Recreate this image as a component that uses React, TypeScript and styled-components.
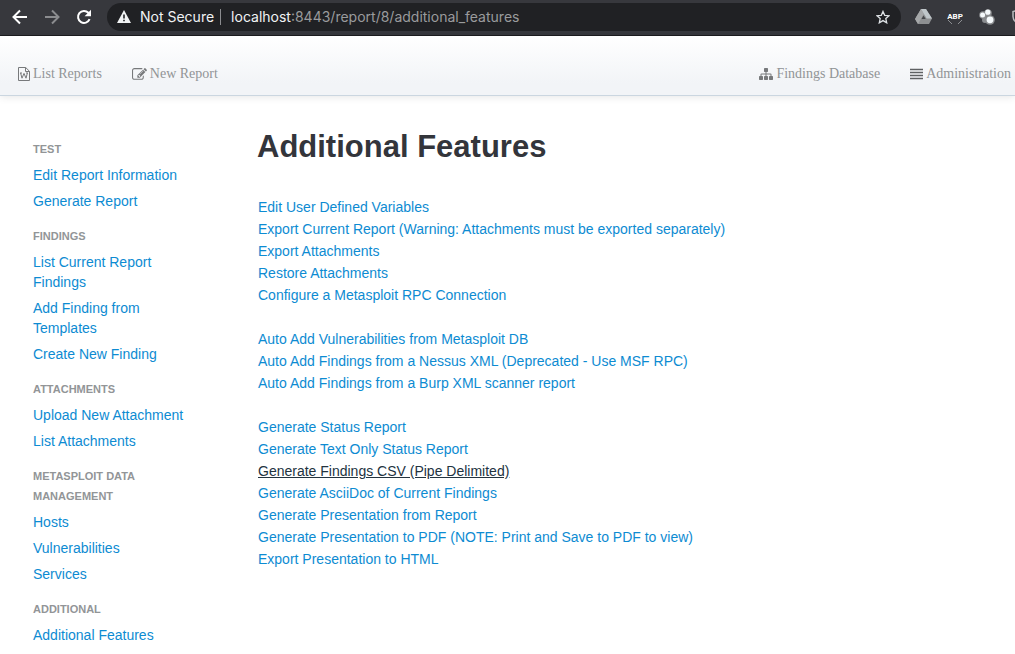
import React from "react";
import styled, { createGlobalStyle } from "styled-components";

const GlobalStyle = createGlobalStyle`
  *, *::before, *::after { box-sizing: border-box; }
  body {
    margin: 0;
    background: #fff;
    color: #333;
    font-family: "Liberation Sans", Arial, Helvetica, sans-serif;
    font-size: 14px;
    line-height: 20px;
    overflow-x: hidden;
  }
`;

const Browser = styled.header`
  display: flex;
  align-items: center;
  height: 36px;
  padding: 0 0 2px 8px;
  background: #37383d;
  border-bottom: 1px solid #1c1d20;
  overflow: hidden;
`;

const ToolButton = styled.button<{ $dim?: boolean }>`
  display: flex;
  align-items: center;
  justify-content: center;
  flex: none;
  width: 32px;
  height: 28px;
  padding: 0 4px;
  border: 0;
  background: none;
  color: ${(p) => (p.$dim ? "#8b8c8f" : "#fff")};
`;

const HistoryButtons = styled.div`
  display: flex;
  flex: none;
  width: 99px;
  margin-left: -4px;
`;

const Omnibox = styled.div`
  display: flex;
  align-items: center;
  flex: 1;
  min-width: 0;
  height: 28px;
  padding: 0 2px 0 10px;
  margin-left: 4px;
  border-radius: 14px;
  background: #202124;
  color: #f1f3f4;
  font-family: Inter, Roboto, sans-serif;
  font-size: 14px;
`;

const Security = styled.span`
  display: flex;
  align-items: center;
  gap: 9px;
  flex: none;
  padding-right: 6px;
  margin-right: 10px;
  border-right: 1px solid #8b8c8f;
  line-height: 16px;
`;

const Address = styled.input`
  flex: 1;
  min-width: 0;
  padding: 0;
  border: 0;
  outline: 0;
  background: none;
  color: #9a9b9d;
  font: inherit;
`;

const Extensions = styled.div`
  display: flex;
  flex: none;
  width: 114px;
  padding-left: 6px;
  overflow: hidden;
`;

const NavBar = styled.nav`
  display: flex;
  align-items: flex-end;
  justify-content: space-between;
  height: 60px;
  padding: 0 4px 11px 18px;
  background: linear-gradient(#fff, #f2f4f7 80%);
  border-bottom: 1px solid #cbd6e0;
  box-shadow: 0 1px 8px rgba(0, 0, 0, 0.1);
  font-family: "Liberation Serif", "Times New Roman", serif;
`;

const NavGroup = styled.div`
  display: flex;
  gap: 30px;
`;

const NavLink = styled.a`
  display: flex;
  align-items: center;
  gap: 3px;
  color: #919496;
  text-decoration: none;
  white-space: nowrap;
  svg { color: #77797b; }
`;

const Layout = styled.div`
  display: flex;
  gap: 56px;
  padding: 31px 20px 0 33px;
`;

const Sidebar = styled.aside`
  flex: none;
  width: 168px;
  padding-top: 9px;
`;

const SideSection = styled.section`
  margin-bottom: 9px;
`;

const SideHeading = styled.h2`
  margin: 0;
  padding: 3px 30px 3px 0;
  color: #929597;
  font-size: 11px;
  line-height: 20px;
  text-transform: uppercase;
`;

const List = styled.ul`
  margin: 0;
  padding: 0;
  list-style: none;
`;

const SideItem = styled.li`
  padding: 3px 0;
`;

const Link = styled.a<{ $active?: boolean }>`
  color: ${(p) => (p.$active ? "#23333f" : "#0d8bd2")};
  text-decoration: ${(p) => (p.$active ? "underline" : "none")};
`;

const Main = styled.main`
  flex: 1;
  min-width: 0;
`;

const Title = styled.h1`
  margin: 0 0 29px;
  color: #33353b;
  font-size: 31px;
  line-height: 40px;
`;

const FeatureList = styled(List)`
  margin-bottom: 22px;
  padding-left: 1px;
  line-height: 22px;
`;

const sections = [
  { title: "Test", links: ["Edit Report Information", "Generate Report"] },
  {
    title: "Findings",
    links: ["List Current Report Findings", "Add Finding from Templates", "Create New Finding"],
  },
  { title: "Attachments", links: ["Upload New Attachment", "List Attachments"] },
  { title: "Metasploit Data Management", links: ["Hosts", "Vulnerabilities", "Services"] },
  { title: "Additional", links: ["Additional Features"] },
];

const featureGroups = [
  [
    "Edit User Defined Variables",
    "Export Current Report (Warning: Attachments must be exported separately)",
    "Export Attachments",
    "Restore Attachments",
    "Configure a Metasploit RPC Connection",
  ],
  [
    "Auto Add Vulnerabilities from Metasploit DB",
    "Auto Add Findings from a Nessus XML (Deprecated - Use MSF RPC)",
    "Auto Add Findings from a Burp XML scanner report",
  ],
  [
    "Generate Status Report",
    "Generate Text Only Status Report",
    "Generate Findings CSV (Pipe Delimited)",
    "Generate AsciiDoc of Current Findings",
    "Generate Presentation from Report",
    "Generate Presentation to PDF (NOTE: Print and Save to PDF to view)",
    "Export Presentation to HTML",
  ],
];

const highlighted = "Generate Findings CSV (Pipe Delimited)";

const ArrowIcon = ({ flip }: { flip?: boolean }) => (
  <svg width="16" height="16" viewBox="0 0 16 16" fill="none" stroke="currentColor" strokeWidth="2">
    <path d={flip ? "M1 8h13M8 1.5 14.5 8 8 14.5" : "M15 8H2M8 1.5 1.5 8 8 14.5"} />
  </svg>
);

const ReloadIcon = () => (
  <svg width="16" height="16" viewBox="0 0 16 16">
    <path d="M13.6 10.2A6 6 0 1 1 12.4 3.8L14 5.4" fill="none" stroke="currentColor" strokeWidth="2" />
    <path d="M15 .8v6.4H8.6z" fill="currentColor" />
  </svg>
);

const WarningIcon = () => (
  <svg width="14" height="13" viewBox="0 0 14 13">
    <path d="M7 0l7 13H0z" fill="currentColor" />
    <path d="M6.2 4.5h1.6v4H6.2zM6.2 9.7h1.6v1.6H6.2z" fill="#202124" />
  </svg>
);

const StarIcon = () => (
  <svg width="14" height="14" viewBox="0 0 14 14" fill="none" stroke="#dfe3e6" strokeWidth="1.3">
    <path d="M7 1.4l1.700 3.900 4.300.4-3.200 2.900.9 4.200L7 10.600l-3.700 2.200.9-4.200L1 5.700l4.300-.4z" />
  </svg>
);

const DriveIcon = () => (
  <svg width="17" height="15" viewBox="0 0 17 15">
    <path d="M6 0h5l6 9.5-3 5.5H3L0 10z" fill="#8d8f91" />
    <path d="M6 0L0 10l3 5 5.8-10z" fill="#a5a7a9" />
    <path d="M6 0h5l6 9.5h-5.3z" fill="#bfc6ca" />
    <path d="M8.5 6.6l2.2 3.4H6.5z" fill="#45474b" />
  </svg>
);

const AdblockIcon = () => (
  <svg width="16" height="17" viewBox="0 0 16 17">
    <path d="M1 12l4 4M15 12l-4 4" stroke="#8d8f92" fill="none" />
    <text x="8" y="11" fill="#fff" fontFamily="Roboto, Arial, sans-serif" fontSize="8" fontWeight="700" textAnchor="middle">
      ABP
    </text>
  </svg>
);

const CirclesIcon = () => (
  <svg width="16" height="16" viewBox="0 0 16 16">
    <g fill="#898b8e">
      <circle cx="4" cy="6" r="3.8" />
      <circle cx="9" cy="4" r="3.8" />
      <circle cx="11" cy="11" r="4.8" />
      <circle cx="6" cy="11" r="3" />
    </g>
    <g fill="#f5f9fb">
      <circle cx="3.6" cy="6" r="2.5" />
      <circle cx="8.8" cy="3.2" r="2.6" />
      <circle cx="11" cy="10.8" r="3.4" />
    </g>
  </svg>
);

const ShieldIcon = () => (
  <svg width="16" height="16" viewBox="0 0 16 16">
    <path d="M8 1L2 2.6v5q0 4.6 6 7.4 6-2.800 6-7.400v-5z" fill="none" stroke="#b9bcbf" strokeWidth="1.5" />
  </svg>
);

const WordFileIcon = () => (
  <svg width="12" height="14" viewBox="0 0 12 14" fill="none" stroke="currentColor">
    <path d="M.5.5h7.200l3.800 3.800v9.200H.5zM7.500.5v4h4" />
    <path d="M2.600 6l1.400 5.200L6 6.400l2 4.800L9.400 6M2 6h2M8 6h2" />
  </svg>
);

const EditIcon = () => (
  <svg width="15" height="15" viewBox="0 0 1792 1792" fill="currentColor">
    <path d="M888 1184l116-116-152-152-116 116v56h96v96h56zm440-720q-16-16-33 1l-350 350q-17 17-1 33t33-1l350-350q17-17 1-33zm80 594v190q0 119-84.500 203.500t-203.500 84.500h-832q-119 0-203.500-84.500t-84.500-203.500v-832q0-119 84.500-203.500t203.500-84.500h832q63 0 117 25 15 7 18 23 3 17-9 29l-49 49q-14 14-32 8-23-6-45-6h-832q-66 0-113 47t-47 113v832q0 66 47 113t113 47h832q66 0 113-47t47-113v-126q0-13 9-22l64-64q15-15 35-7t20 29zm-96-738l288 288-672 672h-288v-288zm444 132l-92 92-288-288 92-92q28-28 68-28t68 28l152 152q28 28 28 68t-28 68z" />
  </svg>
);

const SitemapIcon = () => (
  <svg width="14" height="14" viewBox="0 0 1792 1792" fill="currentColor">
    <path d="M1792 1248v320q0 40-28 68t-68 28h-320q-40 0-68-28t-28-68v-320q0-40 28-68t68-28h96v-192h-512v192h96q40 0 68 28t28 68v320q0 40-28 68t-68 28h-320q-40 0-68-28t-28-68v-320q0-40 28-68t68-28h96v-192h-512v192h96q40 0 68 28t28 68v320q0 40-28 68t-68 28h-320q-40 0-68-28t-28-68v-320q0-40 28-68t68-28h96v-192q0-52 38-90t90-38h512v-192h-96q-40 0-68-28t-28-68v-320q0-40 28-68t68-28h320q40 0 68 28t28 68v320q0 40-28 68t-68 28h-96v192h512q52 0 90 38t38 90v192h96q40 0 68 28t28 68z" />
  </svg>
);

const LinesIcon = () => (
  <svg width="13" height="12" viewBox="0 0 13 12" stroke="#5f6163" strokeWidth="1.4">
    <path d="M0 1.500h13M0 4.500h13M0 7.500h13M0 10.500h13" />
  </svg>
);

export default function App() {
  return (
    <>
      <GlobalStyle />
      <Browser>
        <HistoryButtons>
          <ToolButton aria-label="Back"><ArrowIcon /></ToolButton>
          <ToolButton aria-label="Forward" $dim><ArrowIcon flip /></ToolButton>
          <ToolButton aria-label="Reload"><ReloadIcon /></ToolButton>
        </HistoryButtons>
        <Omnibox>
          <Security><WarningIcon />Not Secure</Security>
          <label htmlFor="address">localhost</label>
          <Address id="address" defaultValue=":8443/report/8/additional_features" />
          <ToolButton aria-label="Bookmark"><StarIcon /></ToolButton>
        </Omnibox>
        <Extensions>
          <ToolButton aria-label="Drive"><DriveIcon /></ToolButton>
          <ToolButton aria-label="Ad blocker"><AdblockIcon /></ToolButton>
          <ToolButton aria-label="Circles"><CirclesIcon /></ToolButton>
          <ToolButton aria-label="Shield"><ShieldIcon /></ToolButton>
        </Extensions>
      </Browser>
      <NavBar>
        <NavGroup>
          <NavLink href="#reports"><WordFileIcon />List Reports</NavLink>
          <NavLink href="#new"><EditIcon />New Report</NavLink>
        </NavGroup>
        <NavGroup>
          <NavLink href="#findings"><SitemapIcon />Findings Database</NavLink>
          <NavLink href="#admin"><LinesIcon />Administration</NavLink>
        </NavGroup>
      </NavBar>
      <Layout>
        <Sidebar>
          {sections.map((section) => (
            <SideSection key={section.title}>
              <SideHeading>{section.title}</SideHeading>
              <List>
                {section.links.map((label) => (
                  <SideItem key={label}><Link href="#section">{label}</Link></SideItem>
                ))}
              </List>
            </SideSection>
          ))}
        </Sidebar>
        <Main>
          <Title>Additional Features</Title>
          {featureGroups.map((group) => (
            <FeatureList key={group[0]}>
              {group.map((label) => (
                <li key={label}>
                  <Link href="#feature" $active={label === highlighted}>{label}</Link>
                </li>
              ))}
            </FeatureList>
          ))}
        </Main>
      </Layout>
    </>
  );
}
